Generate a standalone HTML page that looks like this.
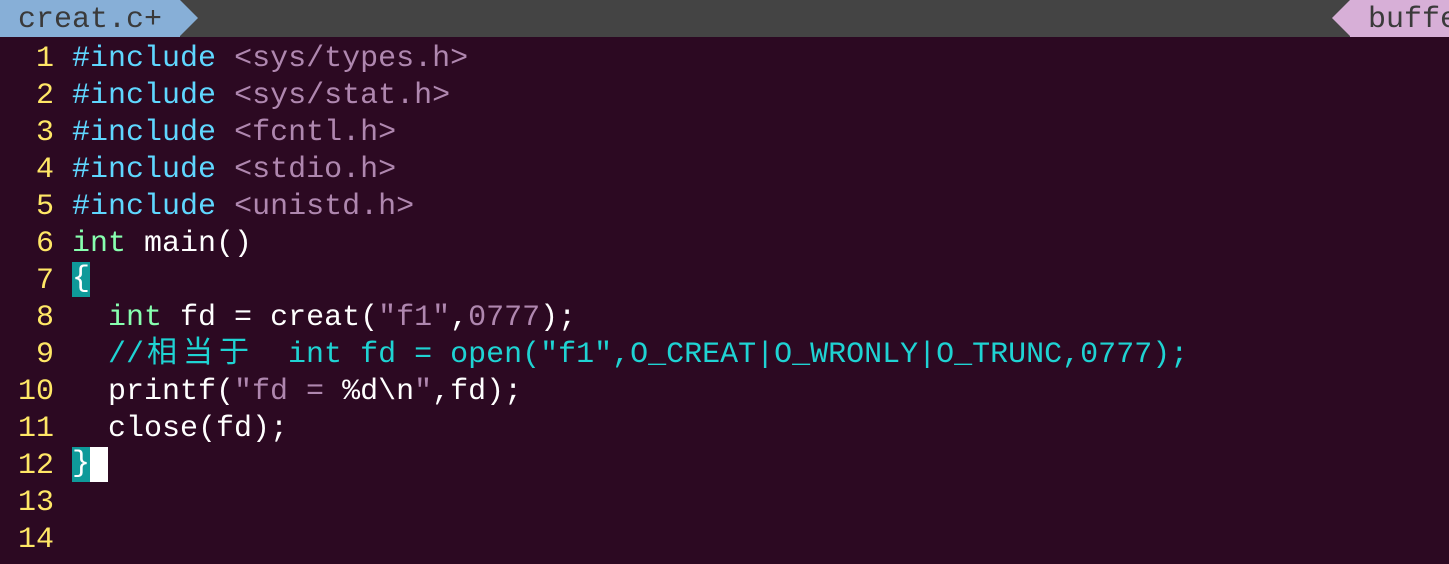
<!DOCTYPE html>
<html><head><meta charset="utf-8"><style>
html,body{margin:0;padding:0;width:1449px;height:564px;overflow:hidden;background:#2c0922;}
body{font-family:"Liberation Mono","Noto Sans CJK SC",monospace;font-size:30px;}
.bar{position:absolute;left:0;top:0;width:1449px;height:37px;background:#444444;}
.t1{position:absolute;left:0;top:0;width:180px;height:37px;background:#87afd7;color:#3a3a3a;line-height:40px;white-space:pre;}
.a1{position:absolute;left:180px;top:0;width:0;height:0;border-top:18.5px solid transparent;border-bottom:18.5px solid transparent;border-left:18px solid #87afd7;}
.t2{position:absolute;left:1350px;top:0;width:99px;height:37px;background:#d7afd7;color:#3a3a3a;line-height:40px;white-space:pre;}
.a2{position:absolute;left:1332px;top:0;width:0;height:0;border-top:18.5px solid transparent;border-bottom:18.5px solid transparent;border-right:18px solid #d7afd7;}
.code{position:absolute;left:0;top:41px;}
.l{height:37px;line-height:37px;white-space:pre;color:#ffffff;}
.n{color:#ffe766;}
.p{color:#5fd7ff;}
.s{color:#af87af;}
.k{color:#87ffaf;}
.c{color:#1fd3d3;}
.cj{display:inline-block;width:36px;text-align:center;}
.cur{background:#0f9a9a;display:inline-block;height:35px;line-height:35px;vertical-align:top;margin-top:-1px;}
.blk{display:inline-block;width:18px;height:35px;background:#fff;vertical-align:top;margin-top:-1px;}
</style></head><body>
<div class="bar"></div>
<div class="t1"> creat.c+</div><div class="a1"></div>
<div class="a2"></div><div class="t2"> buffe</div>
<div class="code">
<div class="l"><span class="n">  1 </span><span class="p">#include</span> <span class="s">&lt;sys/types.h&gt;</span></div>
<div class="l"><span class="n">  2 </span><span class="p">#include</span> <span class="s">&lt;sys/stat.h&gt;</span></div>
<div class="l"><span class="n">  3 </span><span class="p">#include</span> <span class="s">&lt;fcntl.h&gt;</span></div>
<div class="l"><span class="n">  4 </span><span class="p">#include</span> <span class="s">&lt;stdio.h&gt;</span></div>
<div class="l"><span class="n">  5 </span><span class="p">#include</span> <span class="s">&lt;unistd.h&gt;</span></div>
<div class="l"><span class="n">  6 </span><span class="k">int</span> main()</div>
<div class="l"><span class="n">  7 </span><span class="cur">{</span></div>
<div class="l"><span class="n">  8 </span>  <span class="k">int</span> fd = creat(<span class="s">"f1"</span>,<span class="s">0777</span>);</div>
<div class="l"><span class="n">  9 </span>  <span class="c">//<span class="cj">相</span><span class="cj">当</span><span class="cj">于</span>  int fd = open("f1",O_CREAT|O_WRONLY|O_TRUNC,0777);</span></div>
<div class="l"><span class="n"> 10 </span>  printf(<span class="s">"fd = </span>%d\n<span class="s">"</span>,fd);</div>
<div class="l"><span class="n"> 11 </span>  close(fd);</div>
<div class="l"><span class="n"> 12 </span><span class="cur">}</span><span class="blk"></span></div>
<div class="l"><span class="n"> 13 </span></div>
<div class="l"><span class="n"> 14 </span></div>
</div>
</body></html>
